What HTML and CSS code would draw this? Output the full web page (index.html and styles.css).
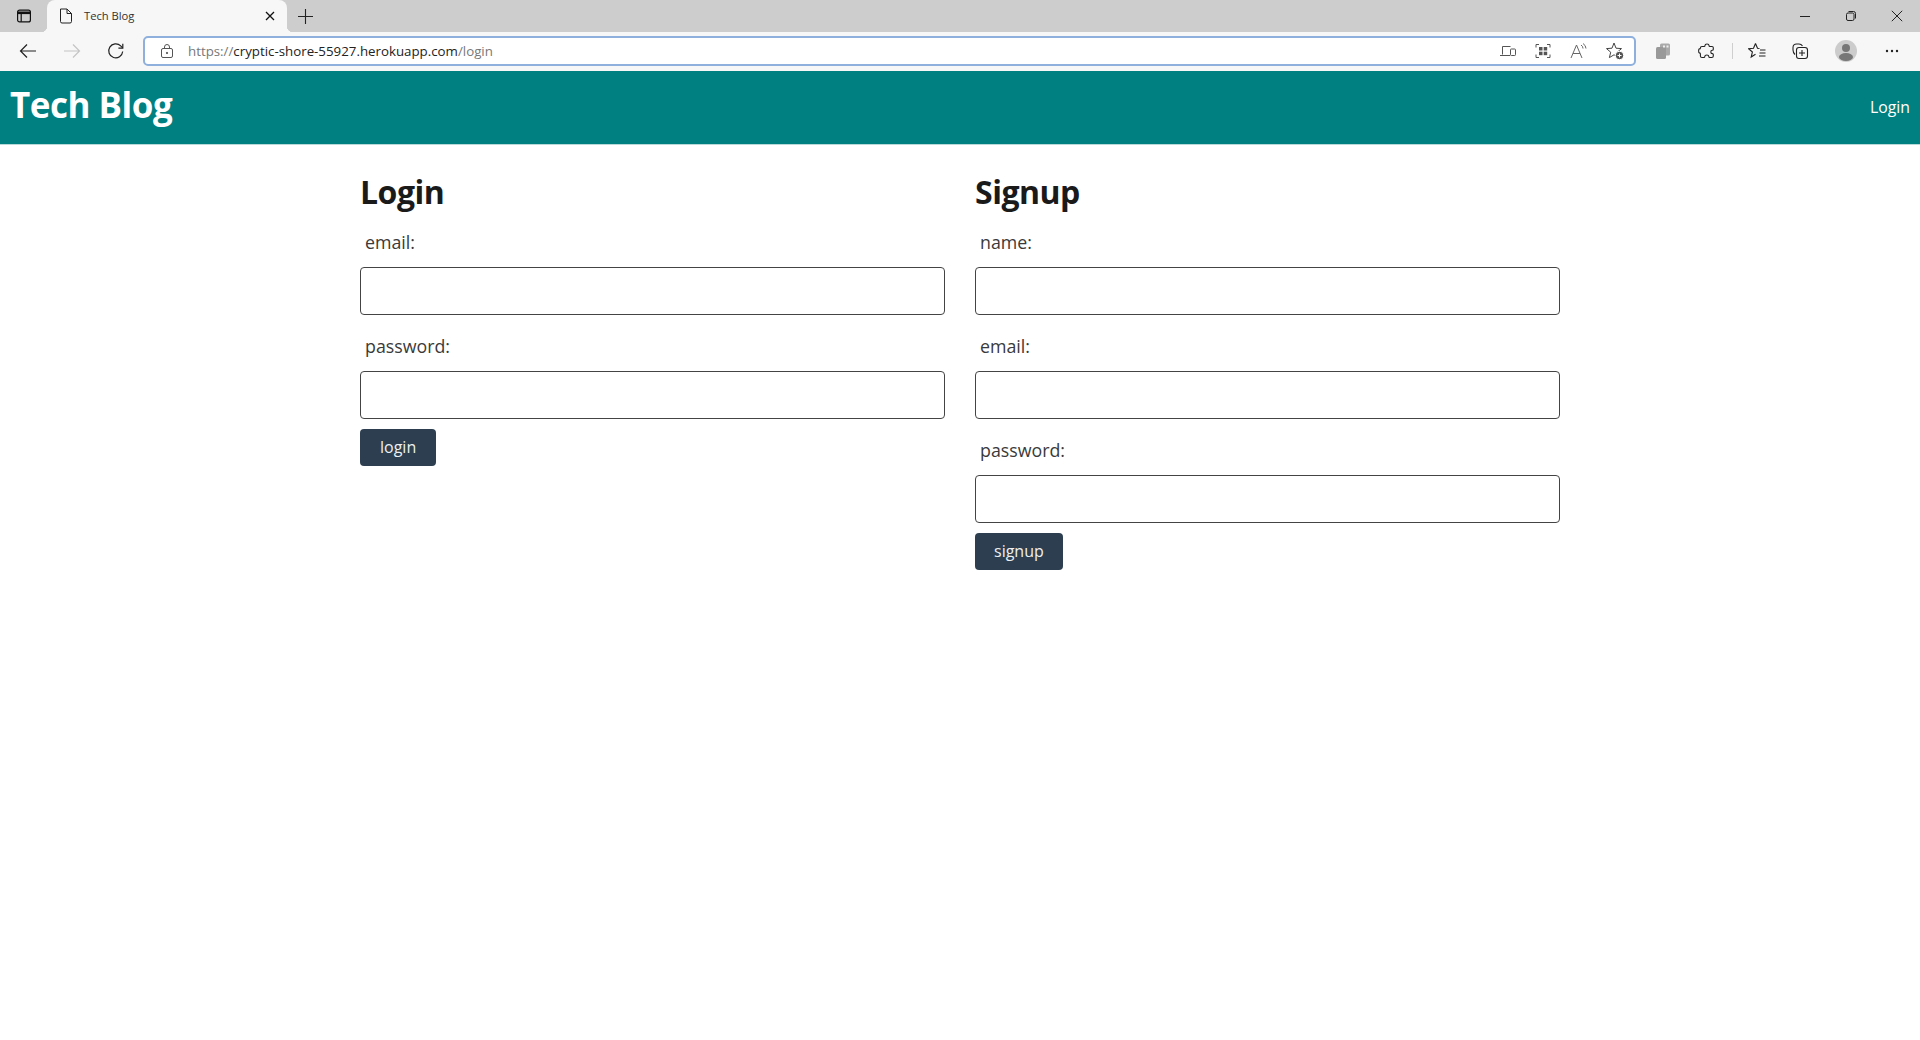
FILE: index.html
```html
<!DOCTYPE html>
<html lang="en">
<head>
<meta charset="utf-8">
<title>Tech Blog</title>
<link rel="stylesheet" href="styles.css">
</head>
<body>
<div class="tabbar">
  <div class="tab-actions">
    <svg width="16" height="16" viewBox="0 0 16 16" fill="none" stroke="#111" stroke-width="1.2"><rect x="1.6" y="2.1" width="12.8" height="11.8" rx="2"/><path d="M1.6 4.8h12.8" stroke-width="2.6"/><path d="M5.2 5v8.8"/></svg>
  </div>
  <div class="tab">
    <svg width="14" height="16" viewBox="0 0 14 16" fill="none" stroke="#222" stroke-width="1"><path d="M1.500 1h6.500l4.500 4.500v8a1.500 1.500 0 0 1-1.500 1.500H3a1.500 1.500 0 0 1-1.500-1.500z"/><path d="M8 1v4.500h4.500"/></svg>
    <span class="tab-title">Tech Blog</span>
    <svg class="tab-close" width="10" height="10" viewBox="0 0 10 10" stroke="#111" stroke-width="1.3"><path d="M1 1l8 8M9 1l-8 8"/></svg>
  </div>
  <svg class="new-tab" width="15" height="15" viewBox="0 0 15 15" stroke="#222" stroke-width="1.1"><path d="M7.500 0v15M0 7.500h15"/></svg>
  <div class="win-controls">
    <svg width="12" height="12" viewBox="0 0 12 12" stroke="#222"><path d="M1 6.500h10"/></svg>
    <svg width="12" height="12" viewBox="0 0 12 12" fill="none" stroke="#222"><rect x="1.500" y="3" width="7.500" height="7.500" rx="1.500"/><path d="M3.500 1.500h5a2 2 0 0 1 2 2v5"/></svg>
    <svg width="12" height="12" viewBox="0 0 12 12" stroke="#222"><path d="M.8.8l10.400 10.400M11.200.8L.8 11.200"/></svg>
  </div>
</div>
<div class="toolbar">
  <div class="nav-btns">
    <svg width="18" height="18" viewBox="0 0 18 18" fill="none" stroke="#222" stroke-width="1.200"><path d="M17 9H1.500M8 2.500L1.500 9 8 15.500"/></svg>
    <svg width="18" height="18" viewBox="0 0 18 18" fill="none" stroke="#c4c4c4" stroke-width="1.200"><path d="M1 9h15.500M10 2.500L16.500 9 10 15.500"/></svg>
    <svg width="18" height="18" viewBox="0 0 18 18" fill="none" stroke="#222" stroke-width="1.200"><path d="M15.700 9.500a7 7 0 1 1-2-5.600l2 2"/><path d="M15.800 1.800v4.400h-4.400"/></svg>
  </div>
  <div class="omnibox">
    <svg width="14" height="16" viewBox="0 0 14 16" fill="none" stroke="#555"><rect x="1.500" y="5.500" width="11" height="9" rx="1.500"/><path d="M4.500 5.500V4a2.500 2.500 0 0 1 5 0v1.500"/><circle cx="7" cy="10" r=".7" fill="#555"/></svg>
    <span class="url"><span class="url-dim">https://</span>cryptic-shore-55927.herokuapp.com<span class="url-dim">/login</span></span>
    <div class="omni-icons">
      <svg width="16" height="16" viewBox="0 0 16 16" fill="none" stroke="#555"><path d="M2.500 11.500v-8h8M0 12.500h10"/><rect x="10.500" y="6" width="5" height="6.500" rx=".8"/></svg>
      <svg width="16" height="16" viewBox="0 0 16 16" fill="none" stroke="#555"><path d="M1 4.500V1.500h3M12 1.500h3v3M15 11.500v3h-3M4 14.500H1v-3"/><g fill="#555" stroke="none"><rect x="4" y="4" width="3.500" height="3.500"/><rect x="8.700" y="4" width="3.500" height="3.500"/><rect x="4" y="8.700" width="3.500" height="3.500"/><rect x="8.700" y="8.700" width="3.500" height="3.500"/></g></svg>
      <svg width="17" height="16" viewBox="0 0 17 16" fill="none" stroke="#666"><path d="M1 15L6.500 2 12 15M3 10.500h7"/><path d="M11 2a4 4 0 0 1 2 3.500M13 .5a6.500 6.500 0 0 1 3 5"/></svg>
      <svg width="18" height="18" viewBox="0 0 18 18" fill="none" stroke="#444"><path d="M8 1l2 5.200 5.500.4-4.200 3.600 1.300 5.400L8 12.800l-4.600 2.800 1.300-5.400L.5 6.600 6 6.200z"/><circle cx="13.500" cy="13.500" r="4.200" fill="#555" stroke="#fff"/><path d="M13.500 11.500v4M11.500 13.500h4" stroke="#fff"/></svg>
    </div>
  </div>
  <div class="tool-icons">
    <svg width="18" height="18" viewBox="0 0 18 18" fill="#999"><rect x="6" y="1.500" width="10" height="12" rx="1.500" fill="#aaa"/><rect x="2" y="5" width="10" height="12" rx="1.500"/><rect x="9" y="3.500" width="2" height="2" fill="#eee"/><rect x="12.500" y="3.500" width="2" height="2" fill="#eee"/></svg>
    <svg class="t-ext" width="18" height="18" viewBox="0 0 18 18" fill="none" stroke="#222" stroke-width="1.100"><path d="M7 3.500C7 1.500 11 1.500 11 3.500c0 .6.300 1 1 1h2c.8 0 1.300.6 1.300 1.300v1.400c0 .7-.4 1-1 1-2 0-2 3.400 0 3.400.6 0 1 .3 1 1v1.300c0 1-.6 1.600-1.500 1.600h-2c-.7 0-1-.4-1-1 0-2-4-2-4 0 0 .6-.4 1-1 1H4c-1 0-1.600-.6-1.600-1.600v-2c0-.6-.4-1-1-1-1 0-1-4 0-4 .6 0 1-.4 1-1V6c0-.9.600-1.500 1.600-1.500h2c.6 0 1-.4 1-1z"/></svg>
    <span class="divider"></span>
    <svg class="t-fav" width="18" height="18" viewBox="0 0 18 18" fill="none" stroke="#222" stroke-width="1.100"><path d="M7.500 1.500l2 4.800 2 .2M7.500 1.500L5.500 6.300l-4.900.4 3.800 3.300-1.200 5 4.300-2.700M12 8h5.500M11.500 11h6M11 14h6.500"/></svg>
    <svg class="t-coll" width="18" height="18" viewBox="0 0 18 18" fill="none" stroke="#222" stroke-width="1.100"><rect x="5.500" y="5.500" width="11" height="11" rx="2.500"/><path d="M11 8v6M8 11h6M4 12.500C2.500 11 2 10 2 8V5.500C2 3.500 3.500 2 5.500 2H8c1.700 0 2.700.7 3.500 2"/></svg>
    <svg class="t-prof" width="22" height="22" viewBox="0 0 22 22"><circle cx="11" cy="11" r="11" fill="#ccc"/><circle cx="11" cy="8" r="4" fill="#777"/><ellipse cx="11" cy="17" rx="7" ry="4" fill="#777"/></svg>
    <svg class="t-more" width="14" height="4" viewBox="0 0 14 4" fill="#222"><circle cx="2" cy="2" r="1.200"/><circle cx="7" cy="2" r="1.200"/><circle cx="12" cy="2" r="1.200"/></svg>
  </div>
</div>
<header class="site-header">
  <a class="brand">Tech Blog</a>
  <a class="nav-link">Login</a>
</header>
<main class="container">
  <section class="col">
    <h2>Login</h2>
    <form class="form">
      <div class="field"><label>email:</label><input type="text"></div>
      <div class="field"><label>password:</label><input type="password"></div>
      <button type="button">login</button>
    </form>
  </section>
  <section class="col">
    <h2>Signup</h2>
    <form class="form">
      <div class="field"><label>name:</label><input type="text"></div>
      <div class="field"><label>email:</label><input type="text"></div>
      <div class="field"><label>password:</label><input type="password"></div>
      <button type="button" class="btn-wide">signup</button>
    </form>
  </section>
</main>
</body>
</html>
```
FILE: styles.css
```css
* { box-sizing: border-box; }
html, body { margin: 0; height: 100%; background: #fff; }
body { font-family: "Open Sans", "Noto Sans", sans-serif; color: #212529; overflow: hidden; }

.tabbar { height: 32px; background: #cdcdcd; display: flex; align-items: center; }
.tab-actions { width: 47px; display: flex; justify-content: center; }
.tab { position: relative; width: 240px; height: 32px; background: #f7f7f7; border-radius: 8px 8px 0 0; display: flex; align-items: center; padding-left: 12px; }
.tab::before, .tab::after { content: ""; position: absolute; bottom: 0; width: 6px; height: 6px; }
.tab::before { left: -6px; background: radial-gradient(circle at 0 0, #cdcdcd 6px, #f7f7f7 6.5px); }
.tab::after { right: -6px; background: radial-gradient(circle at 100% 0, #cdcdcd 6px, #f7f7f7 6.5px); }
.tab-title { font-size: 11.2px; color: #333; margin-left: 11px; padding-bottom: 2px; flex: 1; }
.tab-close { margin-right: 12px; }
.new-tab { margin-left: 11px; }
.win-controls { margin-left: auto; display: flex; gap: 34px; padding-right: 17px; align-items: center; }

.toolbar { height: 39px; background: #f7f7f7; display: flex; align-items: center; padding-bottom: 1px; }
.nav-btns { width: 143px; flex: none; display: flex; gap: 26px; padding-left: 19px; }
.omnibox { width: 1493px; height: 30px; flex: none; background: #fff; border: 2px solid #8fb0dc; border-radius: 5px; display: flex; align-items: center; padding: 0 10px 0 15px; }
.url { margin-left: 14px; font-size: 13.3px; color: #222; }
.url-dim { color: #777; }
.omni-icons { margin-left: auto; display: flex; align-items: center; gap: 19px; }
.tool-icons { flex: 1; display: flex; align-items: center; padding-left: 18px; }
.t-ext { margin-left: 26px; }
.divider { width: 1px; height: 16px; background: #cfcfcf; margin-left: 16px; }
.t-fav { margin-left: 15px; }
.t-coll { margin-left: 25px; }
.t-prof { margin-left: 26px; }
.t-more { margin-left: 28px; }

.site-header { height: 74px; background: #008080; border-bottom: 1px solid #b9d9d9; display: flex; align-items: center; justify-content: space-between; padding: 0 10px; color: #fff; }
.brand { font-size: 35px; font-weight: 700; line-height: 1; margin-bottom: 6px; letter-spacing: -.5px; }
.nav-link { font-size: 15.8px; margin-bottom: 1px; }

.container { width: 1200px; margin: 0 auto; display: grid; grid-template-columns: 1fr 1fr; column-gap: 30px; padding-top: 30px; }
h2 { margin: 0 0 12px; font-size: 32px; line-height: 34px; font-weight: 700; color: #1a1a1a; letter-spacing: -.5px; }
.form { display: flex; flex-direction: column; align-items: flex-start; }
.field { width: 100%; margin-bottom: 10px; }
label { display: block; padding: 9px 5px 0; font-size: 17.8px; line-height: 24px; color: #3a3a3a; height: 46px; }
input { display: block; width: 100%; height: 48px; margin: 0; border: 1px solid #444; border-radius: 4px; background: #fff; outline: none; }
button { height: 37px; padding: 0 20px 2px; border: 0; border-radius: 4px; background: #2c3e50; color: #ecf0f1; font: 16px "Open Sans", sans-serif; }
.btn-wide { padding: 0 19px 2px; }
```
